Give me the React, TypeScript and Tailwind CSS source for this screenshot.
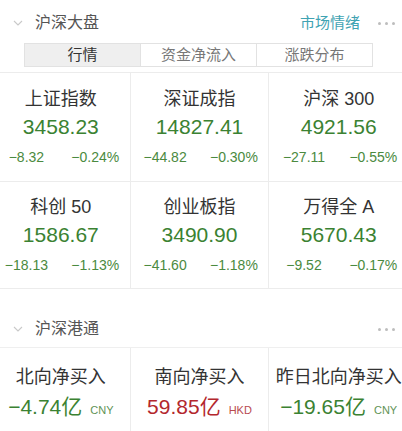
import React from "react";

const FONT = '"Liberation Sans", Arial, "Noto Sans CJK SC", sans-serif';

function Chevron() {
  return (
    <svg width="10" height="6" viewBox="0 0 10 6" className="block">
      <path d="M1 1 L5 5 L9 1" fill="none" stroke="#c9c9c9" strokeWidth="1.1" />
    </svg>
  );
}

function Dots() {
  return (
    <div className="flex items-center gap-[4px]">
      <span className="block w-[3px] h-[3px] rounded-full bg-[#bdbdbd]" />
      <span className="block w-[3px] h-[3px] rounded-full bg-[#bdbdbd]" />
      <span className="block w-[3px] h-[3px] rounded-full bg-[#bdbdbd]" />
    </div>
  );
}

type Idx = { name: string; value: string; chg: string; pct: string };

const row1: Idx[] = [
  { name: "上证指数", value: "3458.23", chg: "−8.32", pct: "−0.24%" },
  { name: "深证成指", value: "14827.41", chg: "−44.82", pct: "−0.30%" },
  { name: "沪深 300", value: "4921.56", chg: "−27.11", pct: "−0.55%" },
];
const row2: Idx[] = [
  { name: "科创 50", value: "1586.67", chg: "−18.13", pct: "−1.13%" },
  { name: "创业板指", value: "3490.90", chg: "−41.60", pct: "−1.18%" },
  { name: "万得全 A", value: "5670.43", chg: "−9.52", pct: "−0.17%" },
];

function Cell({ d, last, top }: { d: Idx; last: boolean; top: string }) {
  return (
    <div className={`flex flex-col items-center ${top} ${last ? "" : "border-r border-[#ececec]"}`}>
      <div className="text-[18px] leading-[24px] text-[#333]">{d.name}</div>
      <div className="mt-[3px] text-[21px] leading-[26px] text-[#3b8232]">{d.value}</div>
      <div className="mt-[8px] grid grid-cols-2 w-full text-[14px] leading-[18px] text-[#4b8a40] text-center">
        <span>{d.chg}</span>
        <span>{d.pct}</span>
      </div>
    </div>
  );
}

const flows = [
  { name: "北向净买入", value: "−4.74亿", unit: "CNY", red: false },
  { name: "南向净买入", value: "59.85亿", unit: "HKD", red: true },
  { name: "昨日北向净买入", value: "−19.65亿", unit: "CNY", red: false },
];

export default function App() {
  return (
    <div className="w-[402px] h-[431px] overflow-hidden bg-white" style={{ fontFamily: FONT }}>
      {/* Header 1 */}
      <div className="h-[43px] pt-[3px] flex items-center pl-[13px] pr-[7px]">
        <Chevron />
        <span className="ml-[12px] text-[16px] text-[#555]">沪深大盘</span>
        <span className="ml-auto text-[15px] text-[#3fa3b3]">市场情绪</span>
        <div className="ml-[18px]">
          <Dots />
        </div>
      </div>
      {/* Tabs */}
      <div className="ml-[24px] w-[349px] h-[24px] flex border border-[#e2e2e2] text-[15px] leading-[22px]">
        <div className="flex-1 bg-[#efefef] text-[#333] text-center">行情</div>
        <div className="flex-1 border-l border-[#e2e2e2] text-[#777] text-center">资金净流入</div>
        <div className="flex-1 border-l border-[#e2e2e2] text-[#777] text-center">涨跌分布</div>
      </div>
      {/* Index grid */}
      <div className="mt-[5px] -ml-[8px] w-[416px] border-t border-[#ececec]">
        <div className="grid grid-cols-3 h-[109px] border-b border-[#ececec]">
          {row1.map((d, i) => (
            <Cell key={d.name} d={d} last={i === 2} top="pt-[14px]" />
          ))}
        </div>
        <div className="grid grid-cols-3 h-[107px] border-b border-[#ececec]">
          {row2.map((d, i) => (
            <Cell key={d.name} d={d} last={i === 2} top="pt-[13px]" />
          ))}
        </div>
      </div>
      {/* Header 2 */}
      <div className="h-[59px] pt-[22px] border-b border-[#efefef]">
        <div className="h-[36px] flex items-center pl-[13px] pr-[7px]">
          <Chevron />
          <span className="ml-[12px] text-[16px] text-[#555]">沪深港通</span>
          <div className="ml-auto">
            <Dots />
          </div>
        </div>
      </div>
      {/* Flows */}
      <div className="-ml-[8px] w-[416px] grid grid-cols-3 h-[90px]">
        {flows.map((f, i) => (
          <div
            key={f.name}
            className={`flex flex-col items-center pt-[17px] ${i < 2 ? "border-r border-[#ececec]" : ""}`}
          >
            <div className="text-[18px] leading-[24px] text-[#333]">{f.name}</div>
            <div className={`mt-[5px] leading-[26px] flex items-baseline ${f.red ? "text-[#b3272d]" : "text-[#3b8232]"}`}>
              <span className="text-[21px]">{f.value}</span>
              <span className={`ml-[8px] text-[11px] ${f.red ? "text-[#b84a4f]" : "text-[#5f9355]"}`}>{f.unit}</span>
            </div>
          </div>
        ))}
      </div>
    </div>
  );
}
